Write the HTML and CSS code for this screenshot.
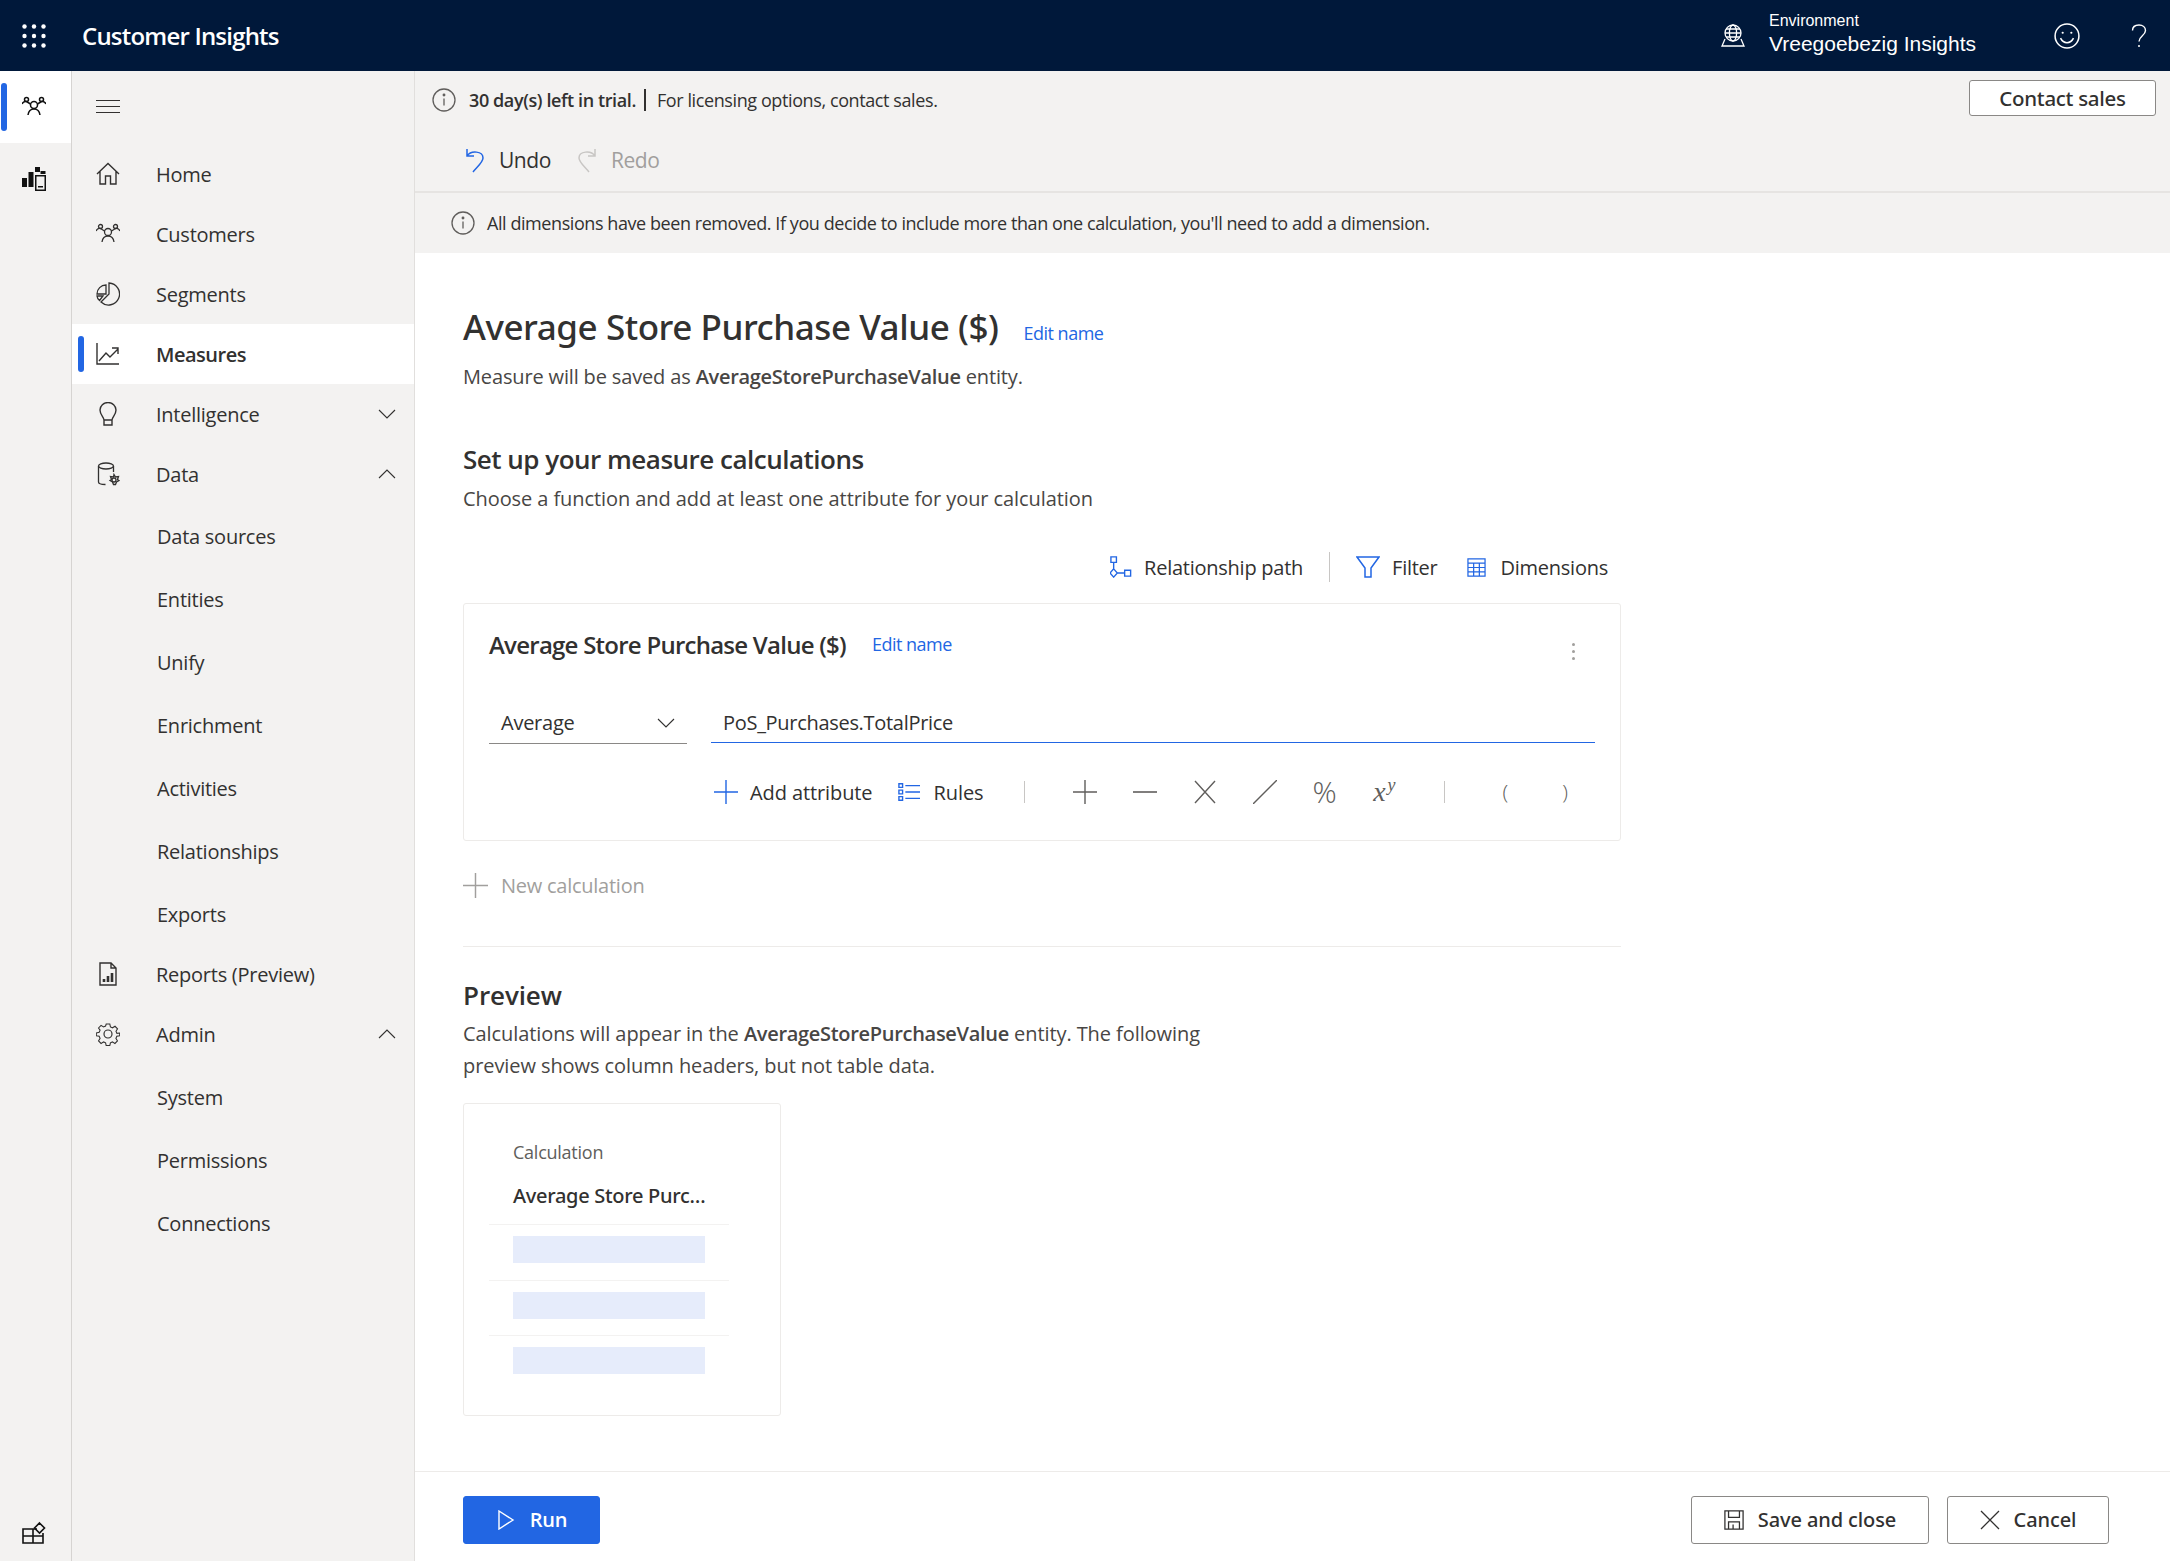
FILE: index.html
```html
<!DOCTYPE html>
<html lang="en">
<head>
    <meta charset="UTF-8">
    <title>Customer Insights</title>
    <link rel="stylesheet" href="styles.css">
</head>
<body>
    <header class="topbar">
        <svg class="waffle" viewBox="0 0 24 24" fill="#fff"><circle cx="2.5" cy="2.5" r="2.2"/><circle cx="12" cy="2.5" r="2.2"/><circle cx="21.5" cy="2.5" r="2.2"/><circle cx="2.5" cy="12" r="2.2"/><circle cx="12" cy="12" r="2.2"/><circle cx="21.5" cy="12" r="2.2"/><circle cx="2.5" cy="21.5" r="2.2"/><circle cx="12" cy="21.5" r="2.2"/><circle cx="21.5" cy="21.5" r="2.2"/></svg>
        <div class="brand">Customer Insights</div>
        <svg class="env-icon" viewBox="0 0 24 24" fill="none" stroke="#fff" stroke-width="1.3"><circle cx="12" cy="9" r="8"/><ellipse cx="12" cy="9" rx="3.6" ry="8"/><path d="M4 9h16M5 5h14M5 13h14M4 15l-3 7h22l-3-7"/></svg>
        <div class="env">
            <div class="env-label">Environment</div>
            <div class="env-name">Vreegoebezig Insights</div>
        </div>
        <svg class="smile" viewBox="0 0 24 24" fill="none" stroke="#fff" stroke-width="1.4"><circle cx="12" cy="12" r="11"/><path d="M6 14c1.5 3 3.6 4.2 6 4.2s4.500-1.200 6-4.200"/><circle cx="8" cy="9" r="1" fill="#fff" stroke="none"/><circle cx="16" cy="9" r="1" fill="#fff" stroke="none"/></svg>
        <svg class="help" viewBox="0 0 16 24" fill="none" stroke="#fff" stroke-width="1.4"><path d="M1.500 6.500C1.500 3 4.300 1 8 1s6.500 2.200 6.500 5.500c0 5-6.500 5.500-6.500 11"/><circle cx="8" cy="22" r="1" fill="#fff" stroke="none"/></svg>
    </header>

    <div class="layout">
        <aside class="rail">
            <div class="rail-item active">
                <span class="marker"></span>
                <svg class="icon" viewBox="0 0 24 24" fill="none" stroke="#111" stroke-width="1.500"><circle cx="12" cy="10" r="3.500"/><path d="M6 20c.5-3.500 2.500-6 6-6s5.500 2.500 6 6"/><circle cx="4.500" cy="4.500" r="2"/><circle cx="19.500" cy="4.500" r="2"/><path d="M0 9c1-2 2.300-3 4.500-2.500L8.500 9M24 9c-1-2-2.300-3-4.500-2.500L15.500 9"/></svg>
            </div>
            <div class="rail-item">
                <svg class="icon" viewBox="0 0 24 24" fill="#111"><rect x="0" y="11" width="5" height="9"/><rect x="6.500" y="5" width="5" height="15"/><rect x="13" y="0" width="5" height="5"/><rect x="18.500" y="4" width="5" height="3"/><path d="M13 8h11v16H13zM14.500 9.500v13h8v-13zM16 19h5v1.500h-5z" fill-rule="evenodd"/></svg>
            </div>
            <div class="rail-bottom">
                <svg class="icon" viewBox="0 0 24 24" fill="none" stroke="#111" stroke-width="1.600"><path d="M1 8h10v7H1zM1 15h10v7H1zM11 15h10v7H11zM11 8h4M21 15v-3"/><path d="M17.500 2l5 5-5 5-5-5z"/></svg>
            </div>
        </aside>

        <nav class="nav">
            <div class="burger"><span></span><span></span><span></span></div>

            <a class="nav-item">
                <svg class="icon" viewBox="0 0 24 24" fill="none" stroke="#323130" stroke-width="1.400"><path d="M1 12L12 1.500 23 12M4 9.500V22h5.500v-8h5v8H20V9.500"/></svg>
                Home
            </a>
            <a class="nav-item">
                <svg class="icon" viewBox="0 0 24 24" fill="none" stroke="#323130" stroke-width="1.300"><circle cx="12" cy="10" r="3.500"/><path d="M6 20c.5-3.500 2.500-6 6-6s5.500 2.500 6 6"/><circle cx="4.500" cy="4.500" r="2"/><circle cx="19.500" cy="4.500" r="2"/><path d="M0 9c1-2 2.300-3 4.500-2.500L8.500 9M24 9c-1-2-2.300-3-4.500-2.500L15.500 9"/></svg>
                Customers
            </a>
            <a class="nav-item">
                <svg class="icon" viewBox="0 0 24 24" fill="none" stroke="#323130" stroke-width="1.300"><path d="M10 3v9H1C1 7 5 3 10 3zM13 1a11 11 0 1 1-8 19l8-8zM1 14h6l-3.500 4.500C2 17.500 1.200 15.800 1 14z"/></svg>
                Segments
            </a>
            <a class="nav-item active">
                <span class="marker"></span>
                <svg class="icon" viewBox="0 0 24 24" fill="none" stroke="#323130" stroke-width="1.400"><path d="M1 1v21h22M3 19l7-8 4 4 8-8M16 6h6v6"/></svg>
                Measures
            </a>
            <a class="nav-item">
                <svg class="icon" viewBox="0 0 24 24" fill="none" stroke="#323130" stroke-width="1.400"><path d="M8 18c0-3-4-5-4-10a8 7.500 0 0 1 16 0c0 5-4 7-4 10zM8 18v5h8v-5"/></svg>
                Intelligence
                <svg class="chev" viewBox="0 0 18 10" fill="none" stroke="#323130" stroke-width="1.100"><path d="M1 1l8 8 8-8"/></svg>
            </a>
            <a class="nav-item">
                <svg class="icon" viewBox="0 0 24 24" fill="none" stroke="#323130" stroke-width="1.300"><ellipse cx="10" cy="4" rx="7.500" ry="3"/><path d="M2.500 4v16c0 1.500 3 2.500 7 2.500M17.500 4v6"/><circle cx="18" cy="18" r="2"/><path d="M18 12.500l1.500 2.500 3-.5-1 3 1.500 1-2.500 1.500-1 2.500h-2l-1-2.500-2.500-1.500 1.500-1-1-3 3 .5z"/></svg>
                Data
                <svg class="chev" viewBox="0 0 18 10" fill="none" stroke="#323130" stroke-width="1.100"><path d="M1 9l8-8 8 8"/></svg>
            </a>
            <div class="sub-list data-list">
                <a class="sub-item">Data sources</a>
                <a class="sub-item">Entities</a>
                <a class="sub-item">Unify</a>
                <a class="sub-item">Enrichment</a>
                <a class="sub-item">Activities</a>
                <a class="sub-item">Relationships</a>
                <a class="sub-item">Exports</a>
            </div>
            <a class="nav-item">
                <svg class="icon" viewBox="0 0 24 24" fill="none" stroke="#323130" stroke-width="1.400"><path d="M4 1h11l5 5v17H4zM15 1v5h5"/><path d="M8 20v-3M12 20v-6M16 20v-9" stroke-width="2.600"/></svg>
                Reports (Preview)
            </a>
            <a class="nav-item">
                <svg class="icon" viewBox="0 0 24 24" fill="none" stroke="#323130" stroke-width="1.200"><circle cx="12" cy="12" r="4"/><path d="M10 1h4l.7 3.200 2.300 1 2.800-1.700 2.800 2.900-1.700 2.700 1 2.300L25 11v3l-3.200.7-1 2.300 1.700 2.700-2.800 2.900-2.800-1.700-2.200 1-.7 3.100h-4l-.7-3.100-2.200-1-2.800 1.700-2.800-2.900L3.200 17l-1-2.300L-1 14v-3l3.200-.9 1-2.300L1.500 5.400l2.800-2.900L7 4.200l2.300-1z" transform="translate(1.200 1.100) scale(.9)"/></svg>
                Admin
                <svg class="chev" viewBox="0 0 18 10" fill="none" stroke="#323130" stroke-width="1.100"><path d="M1 9l8-8 8 8"/></svg>
            </a>
            <div class="sub-list admin-list">
                <a class="sub-item">System</a>
                <a class="sub-item">Permissions</a>
                <a class="sub-item">Connections</a>
            </div>
        </nav>

        <main class="main">
            <div class="trial">
                <svg class="info" viewBox="0 0 24 24" fill="none" stroke="#605e5c" stroke-width="1.300"><circle cx="12" cy="12" r="11"/><path d="M12 10.500v7"/><circle cx="12" cy="7" r=".8" fill="#605e5c"/></svg>
                <span class="trial-left">30 day(s) left in trial.</span>
                <span class="trial-rest">For licensing options, contact sales.</span>
                <button class="btn contact">Contact sales</button>
            </div>
            <div class="undo-row">
                <span class="undo">
                    <svg class="undo-icon" viewBox="0 0 20 26" fill="none" stroke="#2266e3" stroke-width="1.500"><path d="M2 2v7h7M2 9c4-6 16-5 16 2 0 4-5 8-10 14"/></svg>
                    Undo
                </span>
                <span class="undo redo">
                    <svg class="undo-icon" viewBox="0 0 20 26" fill="none" stroke="#c8c6c4" stroke-width="1.500"><path d="M18 2v7h-7M18 9C14 3 2 4 2 11c0 4 5 8 10 14"/></svg>
                    Redo
                </span>
            </div>
            <div class="notice">
                <svg class="info" viewBox="0 0 24 24" fill="none" stroke="#605e5c" stroke-width="1.300"><circle cx="12" cy="12" r="11"/><path d="M12 10.500v7"/><circle cx="12" cy="7" r=".8" fill="#605e5c"/></svg>
                All dimensions have been removed. If you decide to include more than one calculation, you'll need to add a dimension.
            </div>

            <div class="content">
                <div class="title-row">
                    <h1>Average Store Purchase Value ($)</h1>
                    <a class="edit-name">Edit name</a>
                </div>
                <p class="saved-as">Measure will be saved as <b>AverageStorePurchaseValue</b> entity.</p>

                <h2 class="setup">Set up your measure calculations</h2>
                <p class="desc">Choose a function and add at least one attribute for your calculation</p>

                <div class="tools">
                    <span class="tool rel">
                        <svg class="tool-icon" viewBox="0 0 24 24" fill="none" stroke="#2266e3" stroke-width="1.500"><path d="M1 1h6v6H1zM4 7v7M4 14l4 4.500L4 23l-4-4.500zM8 18.500h8M16 15.500h6.500v6.500H16z"/></svg>
                        Relationship path
                    </span>
                    <span class="tool-sep"></span>
                    <span class="tool filter">
                        <svg class="tool-icon" viewBox="0 0 24 24" fill="none" stroke="#2266e3" stroke-width="1.500"><path d="M1 2h22l-8 11v9H9v-9z"/></svg>
                        Filter
                    </span>
                    <span class="tool dims">
                        <svg class="tool-icon" viewBox="0 0 20 20" fill="none" stroke="#2266e3" stroke-width="1.300"><path d="M1 1h18v18H1zM1 5.500h18M1 10h18M1 14.500h18M7 5.500V19M13 5.500V19"/></svg>
                        Dimensions
                    </span>
                </div>

                <section class="calc-card">
                    <div class="calc-head">
                        <h3>Average Store Purchase Value ($)</h3>
                        <a class="edit-name small">Edit name</a>
                        <span class="dots"><i></i><i></i><i></i></span>
                    </div>
                    <div class="calc-fields">
                        <div class="select">
                            Average
                            <svg class="chev" viewBox="0 0 18 10" fill="none" stroke="#323130" stroke-width="1.100"><path d="M1 1l8 8 8-8"/></svg>
                        </div>
                        <div class="formula">PoS_Purchases.TotalPrice</div>
                    </div>
                    <div class="calc-tools">
                        <span class="tool add">
                            <svg class="tool-icon" viewBox="0 0 24 24" fill="none" stroke="#2266e3" stroke-width="1.400"><path d="M0 12h24M12 0v24"/></svg>
                            Add attribute
                        </span>
                        <span class="tool rules">
                            <svg class="tool-icon" viewBox="0 0 24 20" fill="none" stroke="#2266e3" stroke-width="1.500"><path d="M1 1h4v4H1zM1 8h4v4H1zM1 15h4v4H1zM8 3h16M8 10h16M8 17h16"/></svg>
                            Rules
                        </span>
                        <span class="op-sep first"></span>
                        <span class="op"><svg viewBox="0 0 24 24" fill="none" stroke="#605e5c" stroke-width="1.400"><path d="M0 12h24M12 0v24"/></svg></span>
                        <span class="op"><svg viewBox="0 0 24 24" fill="none" stroke="#605e5c" stroke-width="1.600"><path d="M0 12h24"/></svg></span>
                        <span class="op"><svg viewBox="0 0 24 24" fill="none" stroke="#605e5c" stroke-width="1.400"><path d="M2 1l20 22M22 1L2 23"/></svg></span>
                        <span class="op"><svg viewBox="0 0 24 24" fill="none" stroke="#605e5c" stroke-width="1.400"><path d="M24 0L0 24"/></svg></span>
                        <span class="op op-text">%</span>
                        <span class="op op-serif"><span>x<sup>y</sup></span></span>
                        <span class="op-sep second"></span>
                        <span class="op op-paren">(</span>
                        <span class="op op-paren">)</span>
                    </div>
                </section>

                <div class="new-calc">
                    <svg class="tool-icon" viewBox="0 0 24 24" fill="none" stroke="#a19f9d" stroke-width="1.400"><path d="M0 12h24M12 0v24"/></svg>
                    New calculation
                </div>

                <hr class="rule">

                <h2 class="preview-head">Preview</h2>
                <p class="desc preview-desc">Calculations will appear in the <b>AverageStorePurchaseValue</b> entity. The following preview shows column headers, but not table data.</p>

                <div class="preview-card">
                    <div class="preview-label">Calculation</div>
                    <div class="preview-name">Average Store Purchase Value ($)</div>
                    <div class="preview-row"><span></span></div>
                    <div class="preview-row"><span></span></div>
                    <div class="preview-row"><span></span></div>
                </div>
            </div>

            <footer class="footer">
                <button class="btn primary">
                    <svg class="btn-icon" viewBox="0 0 20 20" fill="none" stroke="#fff" stroke-width="1.400"><path d="M3 1l14 9-14 9z"/></svg>
                    Run
                </button>
                <button class="btn save">
                    <svg class="btn-icon" viewBox="0 0 22 22" fill="none" stroke="#323130" stroke-width="1.400"><path d="M1 1h20v20H1zM5 1v7h12V1M5 21v-8h12v8M10 16v5"/></svg>
                    Save and close
                </button>
                <button class="btn cancel">
                    <svg class="btn-icon" viewBox="0 0 20 20" fill="none" stroke="#323130" stroke-width="1.300"><path d="M1 1l18 18M19 1L1 19"/></svg>
                    Cancel
                </button>
            </footer>
        </main>
    </div>
</body>
</html>
```
FILE: styles.css
```css
* {
    box-sizing: border-box;
}
html, body {
    height: 100%;
}
body {
    margin: 0;
    display: flex;
    flex-direction: column;
    overflow: hidden;
    font-family: "Open Sans", "Noto Sans", sans-serif;
    font-size: 20px;
    letter-spacing: -0.25px;
    color: #323130;
    background: #fff;
}
h1, h2, h3, p {
    margin: 0;
}
b {
    font-weight: 600;
    letter-spacing: -0.3px;
}
.icon {
    width: 24px;
    height: 24px;
    flex: none;
}

/* top bar */
.topbar {
    height: 71px;
    flex: none;
    display: flex;
    align-items: center;
    background: #00183a;
    color: #fff;
}
.waffle {
    width: 24px;
    height: 24px;
    margin-left: 22px;
}
.brand {
    margin-left: 36px;
    font-size: 24px;
    font-weight: 600;
    letter-spacing: -0.8px;
    flex: 1;
}
.env-icon {
    width: 24px;
    height: 24px;
    margin-right: 24px;
}
.env {
    width: 285px;
    padding-bottom: 5px;
    font-family: "Liberation Sans", Arial, sans-serif;
    letter-spacing: 0;
}
.env-label {
    font-size: 16px;
    line-height: 20px;
}
.env-name {
    font-size: 21px;
    line-height: 25px;
}
.smile {
    width: 26px;
    height: 26px;
    margin-right: 51px;
}
.help {
    width: 16px;
    height: 24px;
    margin-right: 23px;
}

.layout {
    flex: 1;
    display: flex;
    min-height: 0;
}
.marker {
    position: absolute;
    left: 1px;
    top: 12px;
    bottom: 12px;
    width: 6px;
    border-radius: 3px;
    background: #2266e3;
}

/* icon rail */
.rail {
    width: 72px;
    flex: none;
    display: flex;
    flex-direction: column;
    background: #f3f2f1;
    border-right: 1px solid #d6d4d2;
}
.rail-item {
    position: relative;
    height: 72px;
    padding-right: 3px;
    display: flex;
    align-items: center;
    justify-content: center;
}
.rail-item.active {
    background: #fff;
}
.rail-bottom {
    margin-top: auto;
    height: 56px;
    padding-right: 3px;
    display: flex;
    align-items: center;
    justify-content: center;
}

/* left nav */
.nav {
    width: 343px;
    flex: none;
    background: #f3f2f1;
    border-right: 1px solid #e1dfdd;
}
.burger {
    height: 73px;
    padding: 0 0 2px 24px;
    display: flex;
    flex-direction: column;
    justify-content: center;
    gap: 5px;
}
.burger span {
    display: block;
    width: 24px;
    height: 1px;
    background: #323130;
}
.nav-item {
    position: relative;
    height: 60px;
    display: flex;
    align-items: center;
    gap: 36px;
    padding-left: 24px;
}
.nav-item .marker {
    left: 6px;
}
.nav-item.active {
    background: #fff;
    font-weight: 600;
    letter-spacing: -0.5px;
}
.nav-item .chev {
    position: absolute;
    right: 18px;
    top: 25px;
}
.chev {
    width: 18px;
    height: 10px;
}
.data-list {
    margin: 1px 0 -2px;
}
.admin-list {
    margin-top: 2px;
}
.sub-item {
    display: flex;
    align-items: center;
    height: 63px;
    padding-left: 85px;
}

/* main column */
.main {
    flex: 1;
    min-width: 0;
    display: flex;
    flex-direction: column;
}
.trial {
    height: 58px;
    flex: none;
    display: flex;
    align-items: center;
    padding: 0 14px 0 17px;
    background: #f3f2f1;
    font-size: 18px;
    letter-spacing: -0.4px;
}
.info {
    width: 24px;
    height: 24px;
    flex: none;
}
.trial-left {
    margin-left: 13px;
    padding-right: 8px;
    font-weight: 600;
    letter-spacing: -0.4px;
    border-right: 2px solid #323130;
    line-height: 22px;
}
.trial-rest {
    margin-left: 11px;
    flex: 1;
}
.undo-row {
    height: 64px;
    flex: none;
    display: flex;
    align-items: center;
    gap: 26px;
    padding-left: 50px;
    background: #f3f2f1;
    border-bottom: 2px solid #e6e4e2;
}
.undo {
    display: flex;
    align-items: center;
    gap: 14px;
    font-size: 21px;
    letter-spacing: -0.45px;
}
.undo-icon {
    width: 20px;
    height: 26px;
}
.redo {
    color: #a19f9d;
}
.notice {
    height: 60px;
    flex: none;
    display: flex;
    align-items: center;
    gap: 12px;
    padding-left: 36px;
    background: #f3f2f1;
    font-size: 18px;
    letter-spacing: -0.43px;
}
.content {
    flex: 1;
    min-height: 0;
    overflow: hidden;
    padding: 0 0 0 48px;
}

/* measure heading */
.title-row {
    display: flex;
    align-items: baseline;
    gap: 25px;
    margin-top: 50px;
}
h1 {
    font-family: "Noto Sans", sans-serif;
    font-size: 35px;
    line-height: 48px;
    font-weight: 500;
    letter-spacing: -0.45px;
}
.edit-name {
    font-size: 18px;
    letter-spacing: -0.5px;
    color: #2266e3;
}
.saved-as {
    margin-top: 12px;
    line-height: 28px;
    letter-spacing: -0.15px;
    color: #484644;
}
.setup {
    margin-top: 50px;
    font-size: 26px;
    line-height: 36px;
    font-weight: 600;
    letter-spacing: -0.5px;
}
.desc {
    margin-top: 6px;
    line-height: 32px;
    letter-spacing: -0.08px;
    color: #484644;
}
.tools {
    width: 1158px;
    height: 50px;
    margin-top: 27px;
    display: flex;
    align-items: center;
    justify-content: flex-end;
    padding-right: 13px;
}
.tool {
    display: flex;
    align-items: center;
    gap: 12px;
}
.tool-icon {
    width: 22px;
    height: 22px;
    flex: none;
}
.tool-sep {
    width: 1px;
    height: 30px;
    margin: 0 26px;
    background: #c8c6c4;
}
.filter {
    margin-right: 29px;
}
.filter .tool-icon {
    width: 24px;
    height: 24px;
}
.dims {
    gap: 15px;
}
.dims .tool-icon {
    width: 19px;
    height: 19px;
}

/* calculation card */
.calc-card {
    width: 1158px;
    height: 238px;
    margin-top: 11px;
    padding: 0 25px;
    border: 1px solid #edebe9;
    border-radius: 3px;
}
.calc-head {
    display: flex;
    align-items: center;
    gap: 26px;
    height: 42px;
    margin-top: 19px;
}
h3 {
    font-size: 24px;
    font-weight: 600;
    letter-spacing: -0.75px;
}
.dots {
    margin-left: auto;
    margin-right: 20px;
    margin-top: 14px;
    display: flex;
    flex-direction: column;
    gap: 4px;
}
.dots i {
    display: block;
    width: 3px;
    height: 3px;
    border-radius: 50%;
    background: #a19f9d;
}
.calc-fields {
    display: flex;
    gap: 24px;
    margin-top: 37px;
}
.select {
    width: 198px;
    height: 42px;
    display: flex;
    align-items: center;
    justify-content: space-between;
    padding: 0 12px;
    border-bottom: 1px solid #8a8886;
}
.formula {
    flex: 1;
    height: 41px;
    display: flex;
    align-items: center;
    padding-left: 12px;
    letter-spacing: -0.3px;
    border-bottom: 1px solid #2266e3;
}
.calc-tools {
    display: flex;
    align-items: center;
    height: 44px;
    margin-top: 26px;
    padding-left: 225px;
    letter-spacing: -0.1px;
}
.add {
    width: 184px;
}
.add .tool-icon {
    width: 24px;
    height: 24px;
}
.rules {
    width: 127px;
    gap: 14px;
}
.op-sep {
    width: 1px;
    height: 22px;
    background: #c8c6c4;
}
.op-sep.first + .op {
    margin-left: 30px;
}
.op-sep.second {
    margin-left: 30px;
}
.op {
    width: 60px;
    display: flex;
    justify-content: center;
    align-items: center;
    color: #605e5c;
}
.op svg {
    width: 24px;
    height: 24px;
}
.op-text {
    font-size: 30px;
    line-height: 24px;
    font-weight: 300;
}
.op-serif {
    font-family: "Liberation Serif", serif;
    font-style: italic;
    font-size: 28px;
    line-height: 24px;
}
.op-serif sup {
    margin-left: 2px;
    font-size: 18px;
    line-height: 0;
    vertical-align: 10px;
}
.op-sep + .op-paren {
    margin-left: 30px;
}
.op-paren {
    font-size: 21px;
    font-weight: 300;
}
.new-calc {
    height: 40px;
    margin-top: 24px;
    display: flex;
    align-items: center;
    gap: 13px;
    color: #a19f9d;
}
.new-calc .tool-icon {
    width: 25px;
    height: 25px;
}

/* preview */
.rule {
    width: 1158px;
    height: 1px;
    margin: 41px 0 0;
    border: 0;
    background: #edebe9;
}
.preview-head {
    margin-top: 30px;
    font-size: 26px;
    line-height: 36px;
    font-weight: 600;
    letter-spacing: -0.1px;
}
.preview-desc {
    width: 760px;
    margin-top: 5px;
}
.preview-card {
    width: 318px;
    height: 313px;
    margin-top: 21px;
    padding: 34px 0 0 25px;
    border: 1px solid #edebe9;
    border-radius: 3px;
}
.preview-label {
    padding-left: 24px;
    font-size: 18px;
    line-height: 28px;
    color: #605e5c;
}
.preview-name {
    font-family: "Noto Sans", sans-serif;
    width: 240px;
    height: 44px;
    padding: 0 16px 0 24px;
    margin-top: 15px;
    line-height: 30px;
    font-weight: 500;
    letter-spacing: -0.3px;
    white-space: nowrap;
    overflow: hidden;
    text-overflow: ellipsis;
    border-bottom: 1px solid #f3f2f1;
}
.preview-row {
    width: 240px;
    height: 55.5px;
    padding: 11px 24px 0;
    border-bottom: 1px solid #f3f2f1;
}
.preview-row:last-child {
    border-bottom: 0;
}
.preview-row span {
    display: block;
    width: 192px;
    height: 27px;
    background: #e6ecfb;
}

/* footer */
.footer {
    height: 90px;
    flex: none;
    display: flex;
    align-items: center;
    gap: 18px;
    padding: 6px 61px 0 48px;
    border-top: 1px solid #edebe9;
}
.btn {
    font: inherit;
    letter-spacing: inherit;
    color: #323130;
    background: #fff;
    border: 1px solid #8a8886;
    border-radius: 3px;
    display: flex;
    align-items: center;
    justify-content: center;
}
.btn-icon {
    width: 20px;
    height: 20px;
    flex: none;
}
.contact {
    width: 187px;
    height: 36px;
    margin-bottom: 4px;
    font-family: "Noto Sans", sans-serif;
    font-size: 20.5px;
    font-weight: 500;
    letter-spacing: -0.3px;
}
.footer .btn {
    height: 48px;
    gap: 14px;
}
.primary {
    width: 137px;
    color: #fff;
    font-weight: 600;
    background: #2266e3;
    border-color: #2266e3;
    margin-right: auto;
}
.save, .cancel {
    font-family: "Noto Sans", sans-serif;
    font-weight: 500;
    letter-spacing: -0.1px;
}
.save {
    width: 238px;
}
.cancel {
    width: 162px;
}
```
